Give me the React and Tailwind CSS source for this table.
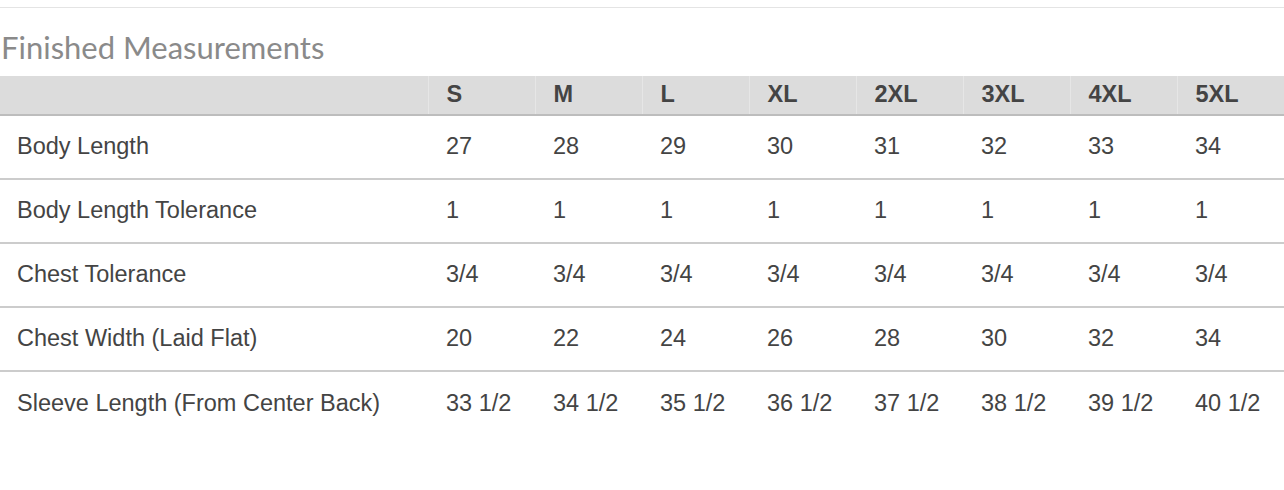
import React from 'react';

const sizes = ['S', 'M', 'L', 'XL', '2XL', '3XL', '4XL', '5XL'];

const rows = [
  { label: 'Body Length', values: ['27', '28', '29', '30', '31', '32', '33', '34'] },
  { label: 'Body Length Tolerance', values: ['1', '1', '1', '1', '1', '1', '1', '1'] },
  { label: 'Chest Tolerance', values: ['3/4', '3/4', '3/4', '3/4', '3/4', '3/4', '3/4', '3/4'] },
  { label: 'Chest Width (Laid Flat)', values: ['20', '22', '24', '26', '28', '30', '32', '34'] },
  {
    label: 'Sleeve Length (From Center Back)',
    values: ['33 1/2', '34 1/2', '35 1/2', '36 1/2', '37 1/2', '38 1/2', '39 1/2', '40 1/2'],
  },
];

export default function App() {
  return (
    <div className="w-[1284px] h-[490px] bg-white pt-[7px] font-['Liberation_Sans',Arial,sans-serif]">
      <div className="border-t border-[#e4e4e4]" />
      <h2 className="pl-[1px] pt-[21px] pb-[11px] text-[31px] leading-[36px] text-[#8a8a8a] font-['Lato','Open_Sans',sans-serif]">
        Finished Measurements
      </h2>
      <table className="w-full border-collapse table-fixed">
        <colgroup>
          <col className="w-[428px]" />
          {sizes.map((s) => (
            <col key={s} />
          ))}
        </colgroup>
        <thead>
          <tr className="bg-[#dcdcdc] border-b-2 border-[#bdbdbd] h-[39px]">
            <th />
            {sizes.map((s) => (
              <th
                key={s}
                className="text-left pl-[18px] text-[23.5px] font-bold text-[#444] border-l border-[#e6e6e6]"
              >
                {s}
              </th>
            ))}
          </tr>
        </thead>
        <tbody>
          {rows.map((row, i) => (
            <tr
              key={row.label}
              className={`h-[64px] ${i < rows.length - 1 ? 'border-b-2 border-[#cccccc]' : ''}`}
            >
              <td className="pl-[17px] text-[23.5px] text-[#444]">{row.label}</td>
              {row.values.map((v, j) => (
                <td key={j} className="pl-[18px] text-[23.5px] text-[#444]">
                  {v}
                </td>
              ))}
            </tr>
          ))}
        </tbody>
      </table>
    </div>
  );
}
